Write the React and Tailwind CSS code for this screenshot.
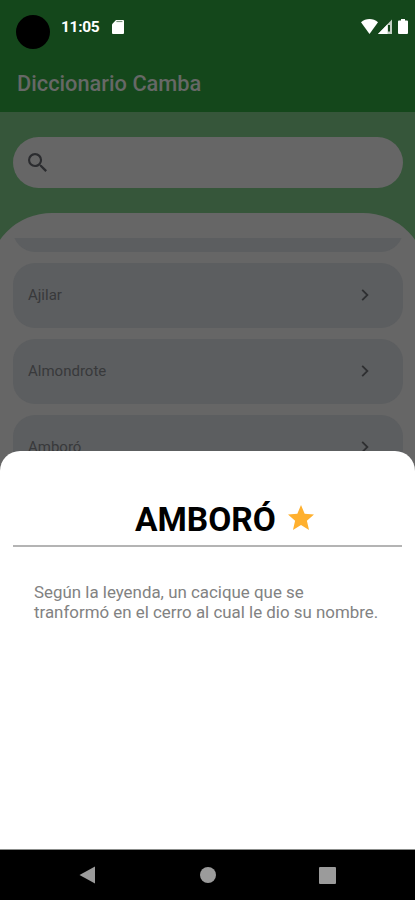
const words = ['Ajilar', 'Almondrote', 'Amboró'];

function StatusBar() {
  return (
    <div className="flex h-[56px] items-start pl-4 pr-[7px] text-white">
      <div className="mt-[15px] size-[34px] shrink-0 rounded-full bg-black" />
      <span className="ml-[11px] mt-[18px] w-[39px] text-[15.5px] leading-[19px] font-bold tracking-[-0.3px]">11:05</span>
      <svg className="ml-[12px] mt-[20px] h-[14px] w-[12px]" viewBox="0 0 12 14" fill="currentColor">
        <path d="M4 0h7a1 1 0 0 1 1 1v12a1 1 0 0 1-1 1H1a1 1 0 0 1-1-1V4.200z" />
        <path d="M4.400 1.500h6" stroke="#7d957f" strokeWidth="1.200" />
      </svg>
      <div className="ml-auto mt-[19px] flex items-start">
        <svg className="h-[15px] w-[17px]" viewBox="0 0 17 14" preserveAspectRatio="none" fill="currentColor">
          <path d="M8.500 0C11.700 0 14.500 1 17 3L8.500 14 0 3C2.500 1 5.300 0 8.500 0z" />
        </svg>
        <svg className="h-[15px] w-[14px]" viewBox="0 0 14 15">
          <path d="M14 0.500V15H0z" fill="#c3cfc4" />
          <path d="M9.500 5.200V15H0z" fill="#fff" />
          <path d="M11 6v6.500" stroke="#14471b" strokeWidth="2" />
        </svg>
        <svg className="ml-[6px] h-[15px] w-[10px]" viewBox="0 0 10 15" fill="currentColor">
          <path d="M3 0h4v1.500h2a1 1 0 0 1 1 1V14a1 1 0 0 1-1 1H1a1 1 0 0 1-1-1V2.500a1 1 0 0 1 1-1h2z" />
        </svg>
      </div>
    </div>
  );
}

function WordCard({ word }) {
  return (
    <div className="flex h-[65px] shrink-0 items-center justify-between rounded-[22px] bg-[#5c5e60] pl-[15px] pr-[34px]">
      <span className="text-[15px] leading-5 text-[#38393b]">{word}</span>
      <svg className="h-[12px] w-[8px]" viewBox="0 0 8 12" fill="none" stroke="#2e2f31" strokeWidth="1.800">
        <path d="M1.200 0.800 6.400 6 1.200 11.200" />
      </svg>
    </div>
  );
}

function DefinitionSheet() {
  return (
    <section className="absolute inset-x-0 top-[451px] h-[399px] rounded-t-[20px] border-b border-b-[#8b8d8b] bg-white px-[13px] pt-[49px]">
      <div className="flex h-[47px] items-start border-b-2 border-b-[#b4b4b4] pl-[122px]">
        <h2 className="text-[33.5px] leading-[40px] font-bold text-black">AMBORÓ</h2>
        <svg className="ml-[12px] mt-[5px] h-[25px] w-[26px]" viewBox="2 2 20 19" preserveAspectRatio="none" fill="#ffb02e">
          <path d="M12 17.270 18.180 21l-1.640-7.030L22 9.240l-7.190-.61L12 2 9.190 8.630 2 9.240l5.460 4.730L5.820 21z" />
        </svg>
      </div>
      <p className="mt-[35px] pl-[21px] text-[16.9px] leading-[20px] text-[#828282]">
        Según la leyenda, un cacique que se
        <br />
        tranformó en el cerro al cual le dio su nombre.
      </p>
    </section>
  );
}

function NavBar() {
  return (
    <nav className="flex h-[50px] shrink-0 items-center bg-black pl-[79px] text-[#9b9b9b]">
      <svg className="h-[18px] w-[17px]" viewBox="0 0 17 18" fill="currentColor">
        <path d="M16 .5v17L.5 9z" />
      </svg>
      <div className="ml-[104px] size-[16px] rounded-full bg-[#9b9b9b]" />
      <div className="ml-[103px] size-[17px] rounded-[1px] bg-[#9b9b9b]" />
    </nav>
  );
}

export default function App() {
  return (
    <div className="relative flex h-[900px] w-[415px] flex-col overflow-hidden bg-[#36563a] font-['Roboto',sans-serif]">
      <header className="h-[112px] shrink-0 bg-[#14471b]">
        <StatusBar />
        <h1 className="ml-[17px] mt-[14px] text-[21.800px] leading-[28px] font-medium text-[#666866]">Diccionario Camba</h1>
      </header>
      <div className="mx-[13px] mt-[25px] flex h-[51px] w-[390px] shrink-0 items-center rounded-full bg-[#666] pl-[15px]">
        <svg className="h-[19px] w-[19px]" viewBox="3 3 17.500 17.500" fill="#2b2c2f">
          <path d="M15.500 14h-.79l-.28-.27A6.471 6.471 0 0 0 16 9.500 6.500 6.500 0 1 0 9.500 16c1.610 0 3.090-.59 4.230-1.570l.27.28v.79l5 4.990L20.490 19l-4.990-5zm-6 0C7.010 14 5 11.990 5 9.500S7.010 5 9.500 5 14 7.010 14 9.500 11.990 14 9.500 14z" />
        </svg>
      </div>
      <main className="-mx-[12px] mt-[25px] flex min-h-0 flex-1 flex-col rounded-t-[64px] bg-[#666] pt-[25px]">
        <div className="ml-[25px] flex min-h-0 w-[390px] flex-1 flex-col overflow-hidden">
          <div className="-mt-[51.500px] flex flex-col gap-[11px]">
            <div className="h-[65px] shrink-0 rounded-[22px] bg-[#5c5e60]" />
            {words.map((word) => (
              <WordCard key={word} word={word} />
            ))}
          </div>
        </div>
      </main>
      <DefinitionSheet />
      <NavBar />
    </div>
  );
}
